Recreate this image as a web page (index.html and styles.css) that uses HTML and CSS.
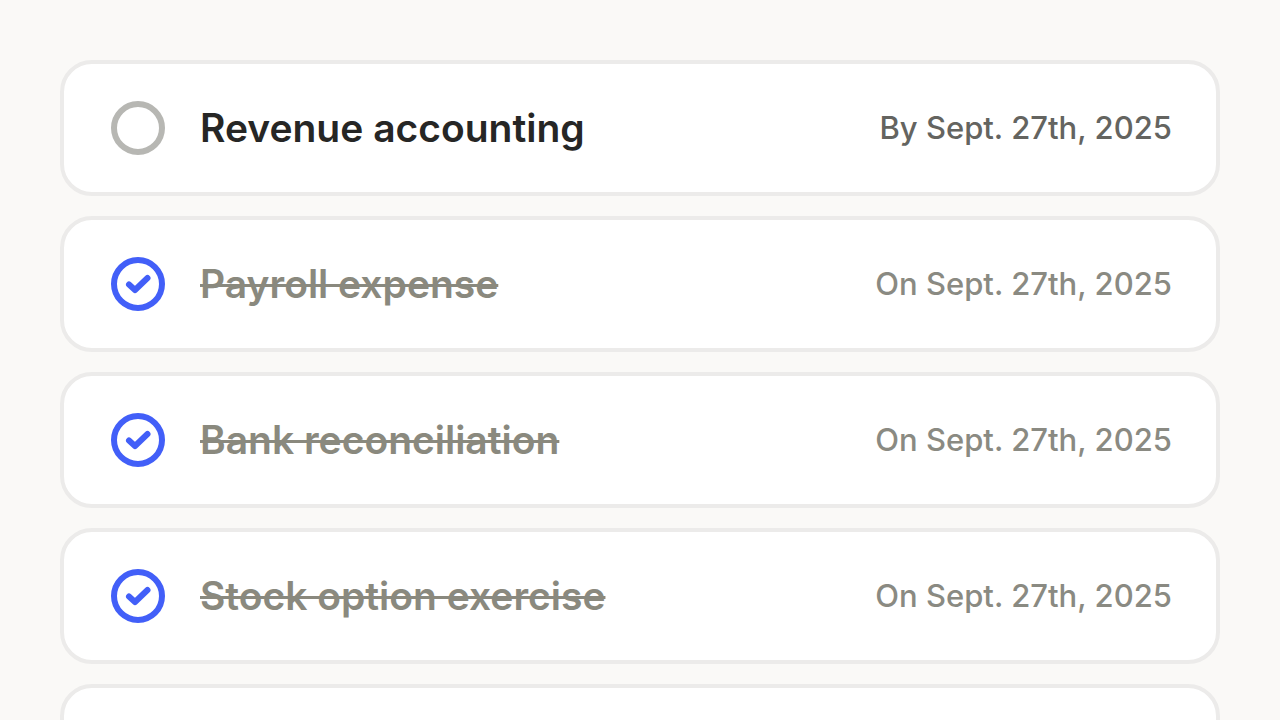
FILE: index.html
```
<!DOCTYPE html>
<html lang="en">
<head>
    <meta charset="UTF-8">
    <meta name="viewport" content="width=device-width, initial-scale=1.0">
    <title>Accounting tasks</title>
    <link rel="stylesheet" href="styles.css">
</head>
<body>
    <ul class="task-list">
        <li class="task">
            <span class="task-check">
                <input type="checkbox" id="revenue">
            </span>
            <label for="revenue" class="task-name">Revenue accounting</label>
            <time class="task-date" datetime="2025-09-27">By Sept. 27th, 2025</time>
        </li>
        <li class="task done">
            <span class="task-check">
                <input type="checkbox" id="payroll" checked>
                <svg class="tick" viewBox="0 0 60 60" aria-hidden="true"><path d="M21 30.500l6 5.500 12.500-12"/></svg>
            </span>
            <label for="payroll" class="task-name">Payroll expense</label>
            <time class="task-date" datetime="2025-09-27">On Sept. 27th, 2025</time>
        </li>
        <li class="task done">
            <span class="task-check">
                <input type="checkbox" id="bank" checked>
                <svg class="tick" viewBox="0 0 60 60" aria-hidden="true"><path d="M21 30.500l6 5.500 12.500-12"/></svg>
            </span>
            <label for="bank" class="task-name">Bank reconciliation</label>
            <time class="task-date" datetime="2025-09-27">On Sept. 27th, 2025</time>
        </li>
        <li class="task done">
            <span class="task-check">
                <input type="checkbox" id="stock" checked>
                <svg class="tick" viewBox="0 0 60 60" aria-hidden="true"><path d="M21 30.500l6 5.500 12.500-12"/></svg>
            </span>
            <label for="stock" class="task-name">Stock option exercise</label>
            <time class="task-date" datetime="2025-09-27">On Sept. 27th, 2025</time>
        </li>
        <li class="task"></li>
    </ul>
</body>
</html>
```

FILE: styles.css
```
* {
    box-sizing: border-box;
}

body {
    margin: 0;
    height: 100vh;
    overflow: hidden; /* the list runs off the bottom edge */
    background-color: #faf9f7;
    font-family: Inter, "Liberation Sans", sans-serif;
}

.task-list {
    display: flex;
    flex-direction: column;
    gap: 20px;
    margin: 0;
    padding: 60px;
    list-style: none;
}

.task {
    display: flex;
    align-items: center;
    gap: 32px;
    min-height: 136px;
    padding: 32px 44px;
    border: 4px solid #ecebea;
    border-radius: 32px;
    background-color: #fff;
}

.task-check {
    position: relative;
    flex: none;
    display: flex;
    width: 60px;
    height: 60px;
    padding: 3px;
}

.task-check input {
    appearance: none;
    width: 54px;
    height: 54px;
    margin: 0;
    border: 6px solid #b7b7b3;
    border-radius: 50%;
}

.task-check input:checked {
    border-color: #425ff8;
}

/* tick mark on top of the checkbox */
.tick {
    position: absolute;
    inset: 0;
    fill: none;
    stroke: #425ff8;
    stroke-width: 6;
    stroke-linecap: round;
    stroke-linejoin: round;
    pointer-events: none;
}

.task-name {
    flex: 1;
    font-size: 39px;
    font-weight: 600;
    line-height: 48px;
    color: #262625;
}

.task-date {
    font-size: 31px;
    font-weight: 500;
    line-height: 40px;
    color: #646460;
}

.done .task-name {
    color: #8a897e;
    text-decoration: line-through;
    text-decoration-thickness: 3px;
}

.done .task-date {
    color: #8a8a82;
}
```
